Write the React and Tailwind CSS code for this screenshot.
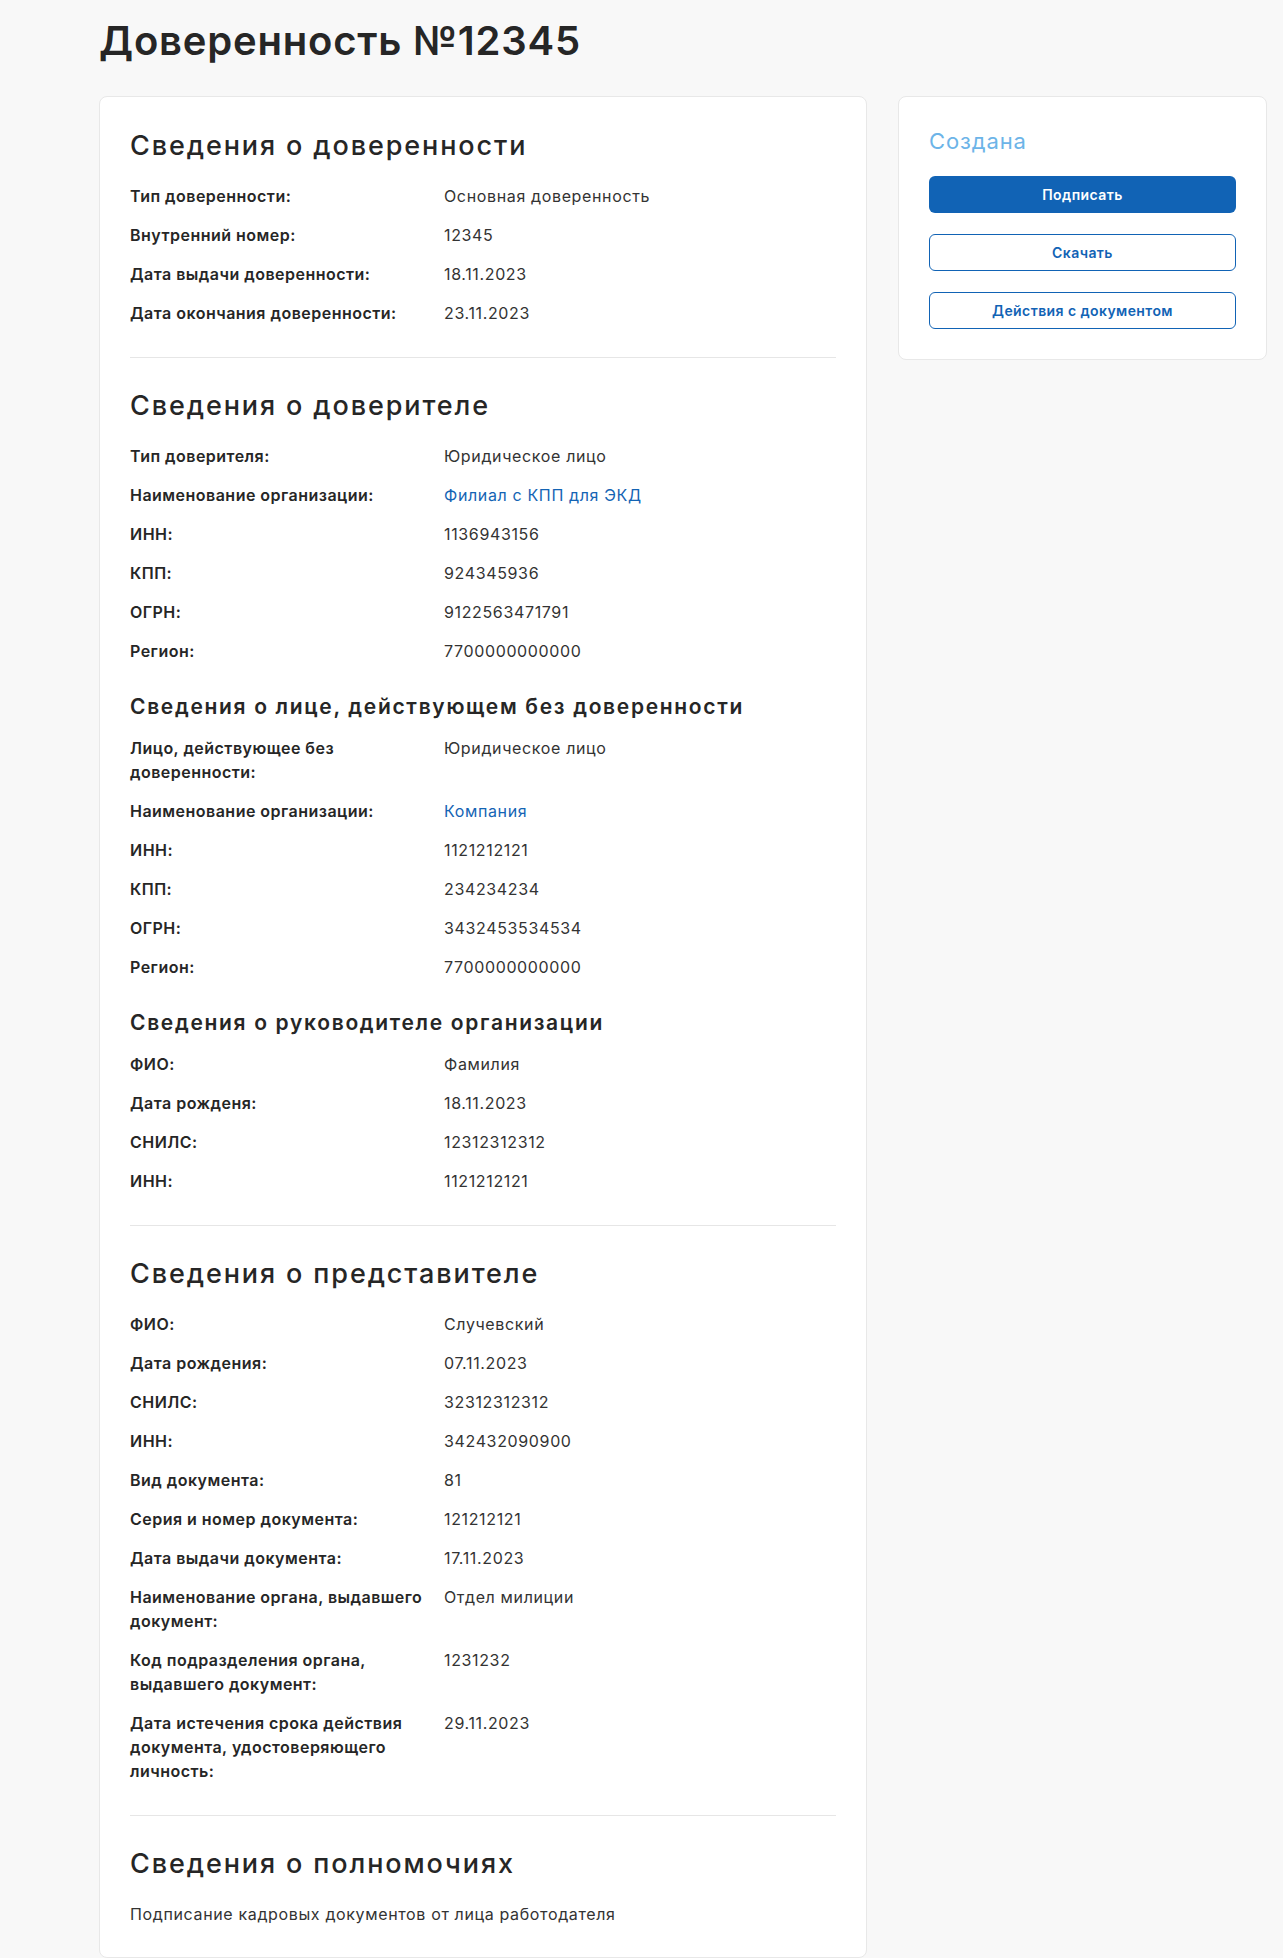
import React from "react";

const FONT = "font-['Inter','Noto_Sans',sans-serif]";

const trust = [
  ["Тип доверенности:", "Основная доверенность"],
  ["Внутренний номер:", "12345"],
  ["Дата выдачи доверенности:", "18.11.2023"],
  ["Дата окончания доверенности:", "23.11.2023"],
];

const principal = [
  ["Тип доверителя:", "Юридическое лицо"],
  ["Наименование организации:", "Филиал с КПП для ЭКД", true],
  ["ИНН:", "1136943156"],
  ["КПП:", "924345936"],
  ["ОГРН:", "9122563471791"],
  ["Регион:", "7700000000000"],
];

const actingPerson = [
  [["Лицо, действующее без", "доверенности:"], "Юридическое лицо"],
  ["Наименование организации:", "Компания", true],
  ["ИНН:", "1121212121"],
  ["КПП:", "234234234"],
  ["ОГРН:", "3432453534534"],
  ["Регион:", "7700000000000"],
];

const head = [
  ["ФИО:", "Фамилия"],
  ["Дата рожденя:", "18.11.2023"],
  ["СНИЛС:", "12312312312"],
  ["ИНН:", "1121212121"],
];

const representative = [
  ["ФИО:", "Случевский"],
  ["Дата рождения:", "07.11.2023"],
  ["СНИЛС:", "32312312312"],
  ["ИНН:", "342432090900"],
  ["Вид документа:", "81"],
  ["Серия и номер документа:", "121212121"],
  ["Дата выдачи документа:", "17.11.2023"],
  [["Наименование органа, выдавшего", "документ:"], "Отдел милиции"],
  [["Код подразделения органа,", "выдавшего документ:"], "1231232"],
  [["Дата истечения срока действия", "документа, удостоверяющего", "личность:"], "29.11.2023"],
];

const Rows = ({ items }) => (
  <div className="flex flex-col gap-[15px]">
    {items.map(([label, value, link], i) => (
      <div key={i} className="flex text-[16px] leading-6">
        <div className="w-[314px] shrink-0 font-semibold tracking-[0.03em] text-[#262626]">
          {Array.isArray(label)
            ? label.map((l, j) => <div key={j} className="whitespace-nowrap">{l}</div>)
            : label}
        </div>
        <div className={`tracking-[0.04em] ${link ? "text-[#1464b4]" : "text-[#333333]"}`}>{value}</div>
      </div>
    ))}
  </div>
);

const Heading = ({ children }) => (
  <h2 className="mb-[22px] text-[27px] font-medium leading-8 tracking-[0.07em] text-[#262626]">{children}</h2>
);

const SubHeading = ({ children }) => (
  <h3 className="mt-[30px] mb-[15px] text-[21px] font-semibold leading-7 tracking-[0.08em] text-[#262626]">
    {children}
  </h3>
);

const Divider = () => <div className="my-[32px] h-px bg-[#e6e6e6]" />;

export default function App() {
  return (
    <div className={`min-h-[1958px] bg-[#f8f8f8] pl-[99px] pr-[16px] pt-[17px] ${FONT}`}>
      <h1 className="text-[40px] font-semibold leading-[48px] tracking-[0.02em] text-[#262626]">
        Доверенность №12345
      </h1>

      <div className="mt-[31px] flex items-start gap-[31px]">
        {/* main info card */}
        <div className="w-[768px] shrink-0 rounded-lg border border-[#e8e8e8] bg-white px-[30px] pt-[33px] pb-[31px]">
          <Heading>Сведения о доверенности</Heading>
          <Rows items={trust} />
          <Divider />

          <Heading>Сведения о доверителе</Heading>
          <Rows items={principal} />
          <SubHeading>Сведения о лице, действующем без доверенности</SubHeading>
          <Rows items={actingPerson} />
          <SubHeading>Сведения о руководителе организации</SubHeading>
          <Rows items={head} />
          <Divider />

          <Heading>Сведения о представителе</Heading>
          <Rows items={representative} />
          <Divider />

          <Heading>Сведения о полномочиях</Heading>
          <p className="text-[16px] leading-6 tracking-[0.04em] text-[#333333]">
            Подписание кадровых документов от лица работодателя
          </p>
        </div>

        {/* status / actions */}
        <div className="w-[369px] shrink-0 rounded-lg border border-[#e8e8e8] bg-white p-[30px]">
          <div className="text-[22px] leading-7 tracking-[0.04em] text-[#6cb4e8]">Создана</div>
          <div className="mt-[21px] flex flex-col gap-[21px]">
            <button className="h-[37px] rounded-md bg-[#1163b5] text-[14px] font-semibold tracking-[0.03em] text-white">
              Подписать
            </button>
            <button className="h-[37px] rounded-md border border-[#1163b5] bg-white text-[14px] font-semibold tracking-[0.03em] text-[#1163b5]">
              Скачать
            </button>
            <button className="h-[37px] rounded-md border border-[#1163b5] bg-white text-[14px] font-semibold tracking-[0.03em] text-[#1163b5]">
              Действия с документом
            </button>
          </div>
        </div>
      </div>
    </div>
  );
}
